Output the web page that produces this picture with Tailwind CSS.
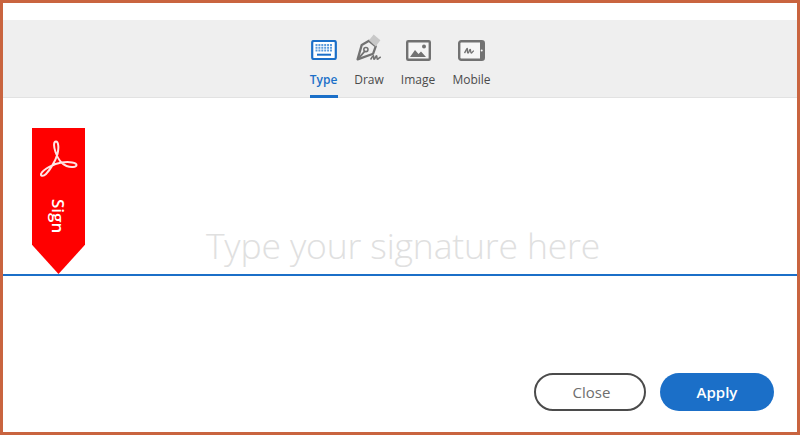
<!DOCTYPE html>
<html>
<head>
<meta charset="utf-8">
<script src="https://cdn.jsdelivr.net/npm/@tailwindcss/browser@4"></script>
</head>
<body class="bg-white">
<div class="w-[800px] h-[435px] border-[3px] border-[#c9643f] bg-white flex flex-col overflow-hidden font-['Open_Sans',sans-serif]">
  <div class="h-[17px]"></div>
  <nav class="h-[78px] bg-[#efefef] border-b border-[#e2e2e2] flex justify-center gap-[17px]">
    <div class="w-[28px] flex flex-col items-center justify-end border-b-[3px] border-[#1b6fc8] -mb-px text-[#1b6fc8]">
      <svg width="26" height="20" viewBox="0 0 26 20" class="mb-[12px]">
        <rect x="1.200" y="1" width="23.600" height="18" rx="1.500" fill="#fff" stroke="#1b6fc8" stroke-width="2.200"/>
        <path d="M4.500 5h17M4.500 7.700h17M4.500 10.400h17" stroke="#5b9bdc" stroke-width="2" stroke-dasharray="2 .9" fill="none"/>
        <path d="M6 14.700h14" stroke="#1b6fc8" stroke-width="2"/>
      </svg>
      <span class="text-[12px] leading-[16px] font-semibold mb-[7px]">Type</span>
    </div>
    <div class="w-[29px] flex flex-col items-center justify-end text-[#4b4b4b]">
      <svg width="30" height="29" viewBox="0 0 28 28" class="mb-[10px]">
        <path d="M14 7.500l6.500 5.500-2.500 7-15 5.500 4-14z" fill="none" stroke="#727272" stroke-width="2.200" stroke-linejoin="round"/>
        <path d="M14 7l4.500-5.500 6.500 5.500-4.500 6z" fill="#c8c8c8"/>
        <path d="M3.500 25l6.500-7.500" stroke="#727272" stroke-width="1.600"/>
        <circle cx="11" cy="16" r="2" fill="none" stroke="#727272" stroke-width="1.500"/>
        <path d="M15.500 25.500c1.500-2 2-3.800 2.800-3.500.6.500-.3 3.300.7 3.300s1.300-3.300 2.200-3.300 0 3.300 1 3.300 1.300-1.800 3.300-1.800" fill="none" stroke="#727272" stroke-width="1.500"/>
      </svg>
      <span class="text-[12px] leading-[16px] mb-[9px]">Draw</span>
    </div>
    <div class="w-[35px] flex flex-col items-center justify-end text-[#4b4b4b]">
      <svg width="25" height="21" viewBox="0 0 25 21" class="mb-[11px]">
        <rect x="1.200" y="1.200" width="22.600" height="18.600" rx="1" fill="#f6f6f6" stroke="#727272" stroke-width="2.400"/>
        <path d="M4 17l5-7 3.500 4 2.500-2.500 5 5.500z" fill="#727272"/>
        <circle cx="18" cy="6.500" r="2" fill="#727272"/>
      </svg>
      <span class="text-[12px] leading-[16px] mb-[9px]">Image</span>
    </div>
    <div class="w-[38px] flex flex-col items-center justify-end text-[#4b4b4b]">
      <svg width="27" height="21" viewBox="0 0 27 21" class="mb-[11px]">
        <rect x="1.200" y="1.200" width="24.600" height="18.600" rx="2" fill="#f6f6f6" stroke="#727272" stroke-width="2.400"/>
        <rect x="22" y="2" width="3.500" height="17" fill="#727272"/>
        <circle cx="23.700" cy="10.500" r="1" fill="#fff"/>
        <path d="M6.500 13c1.500-2 2-4.500 2.700-4.500.6 0-.2 4.500.8 4.500s1.300-3.500 2.200-3.500 0 3.500 1 3.500 1.300-2.200 2.800-2.200" fill="none" stroke="#727272" stroke-width="1.300"/>
      </svg>
      <span class="text-[12px] leading-[16px] mb-[9px]">Mobile</span>
    </div>
  </nav>
  <main class="relative flex-1 flex flex-col">
    <div class="h-[178px] border-b-2 border-[#1b6fc8] flex items-end justify-center pb-[5px] pl-[6px]">
      <span class="text-[35.5px] leading-[48px] font-light text-[#e0e0e0] tracking-[-0.15px]">Type your signature here</span>
    </div>
    <div class="flex-1 flex justify-end items-start gap-[14px] pt-[97px] pr-[23px]">
      <button class="w-[112px] h-[38px] pl-[3px] rounded-full border-2 border-[#4b4b4b] bg-white text-[#6e6e6e] text-[15px] font-normal">Close</button>
      <button class="w-[114px] h-[38px] rounded-full bg-[#1b6fc8] text-white text-[15px] font-semibold">Apply</button>
    </div>
    <div class="absolute left-[29px] top-[30px] w-[53px] h-[146px] bg-[#ff0000] [clip-path:polygon(0_0,100%_0,100%_80%,50%_100%,0_80%)] flex flex-col items-center">
      <svg width="38" height="38" viewBox="0 0 38 38" class="mt-[12px]" fill="none" stroke="#fff" stroke-opacity="0.9" stroke-width="2">
        <path d="M16 1.500c-2.500 0-2.500 5-.5 10.500 2 6 6 12 11 14 4 1.500 10 1.500 10-1s-7-3.500-15-2.500c-8 1-18 7-20 10.500-2 3 1.500 4 4.500 1 4-4 9.500-13 11.500-20 1.500-6 1-12.500-1.500-12.500z"/>
      </svg>
      <span class="mt-[21px] -ml-[2px] text-white text-[17px] leading-[20px] font-semibold [writing-mode:vertical-rl]">Sign</span>
    </div>
  </main>
</div>
</body>
</html>
